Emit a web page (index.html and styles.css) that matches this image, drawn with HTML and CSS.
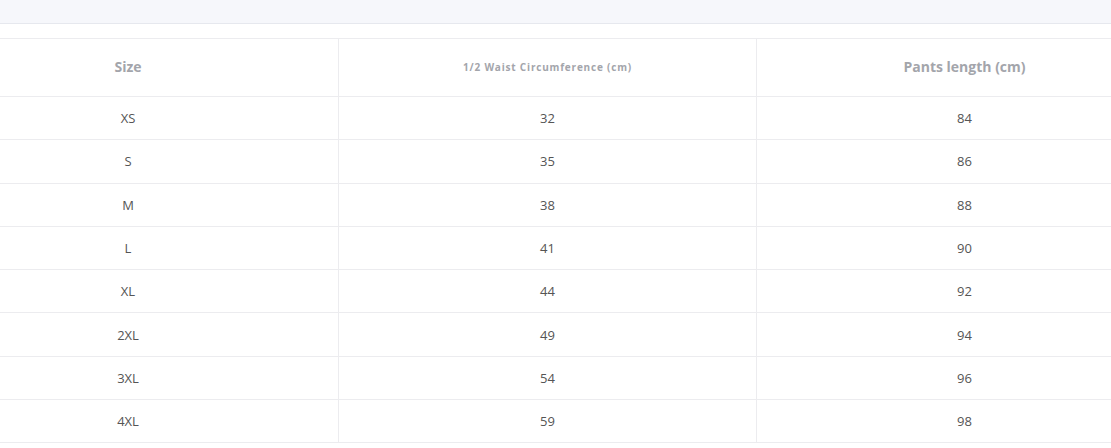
FILE: index.html
```html
<!DOCTYPE html>
<html>
<head>
<meta charset="utf-8">
<link rel="stylesheet" href="styles.css">
</head>
<body>
<div class="topbar"></div>
<div class="wrap">
  <table class="sizes">
    <colgroup>
      <col class="c1">
      <col class="c2">
      <col class="c3">
    </colgroup>
    <thead>
      <tr>
        <th class="big">Size</th>
        <th class="small">1/2 Waist Circumference (cm)</th>
        <th class="big">Pants length (cm)</th>
      </tr>
    </thead>
    <tbody>
      <tr><td>XS</td><td>32</td><td>84</td></tr>
      <tr><td>S</td><td>35</td><td>86</td></tr>
      <tr><td>M</td><td>38</td><td>88</td></tr>
      <tr><td>L</td><td>41</td><td>90</td></tr>
      <tr><td>XL</td><td>44</td><td>92</td></tr>
      <tr><td>2XL</td><td>49</td><td>94</td></tr>
      <tr><td>3XL</td><td>54</td><td>96</td></tr>
      <tr><td>4XL</td><td>59</td><td>98</td></tr>
    </tbody>
  </table>
</div>
</body>
</html>
```

FILE: styles.css
```css
html, body {
  margin: 0;
  padding: 0;
  background: #fff;
  overflow: hidden;
}
body {
  font-family: "Open Sans", "Noto Sans", sans-serif;
  width: 1111px;
  height: 448px;
}
.topbar {
  height: 23px;
  background: #f6f7fb;
  border-bottom: 1px solid #e6e8ee;
}
.wrap {
  padding-top: 14px;
  width: 1111px;
  overflow: hidden;
}
.sizes {
  border-collapse: collapse;
  width: 1255px;
  margin-left: -83px;
  table-layout: fixed;
}
.sizes .c1 { width: 421px; }
.sizes .c2 { width: 418px; }
.sizes .c3 { width: 416px; }
.sizes th, .sizes td {
  border: 1px solid #ececef;
  text-align: center;
  padding: 0;
}
.sizes thead tr { height: 58px; }
.sizes tbody tr { height: 43.3px; }
.sizes th {
  color: #a3a5ab;
  font-weight: 700;
  padding-bottom: 2px;
}
.sizes th.big {
  font-size: 14px;
}
.sizes th.small {
  font-size: 10px;
  letter-spacing: 0.8px;
}
.sizes td {
  color: #555;
  font-size: 13px;
}
```
